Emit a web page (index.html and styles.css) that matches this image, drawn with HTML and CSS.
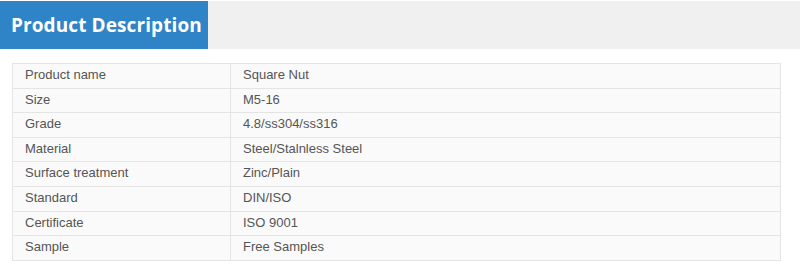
FILE: index.html
```html
<!DOCTYPE html>
<html>
<head>
<meta charset="utf-8">
<link rel="stylesheet" href="styles.css">
</head>
<body>
<div class="band">
  <h2 class="title">Product Description</h2>
</div>
<table class="spec">
  <tr><td class="k">Product name</td><td>Square Nut</td></tr>
  <tr><td class="k">Size</td><td>M5-16</td></tr>
  <tr><td class="k">Grade</td><td>4.8/ss304/ss316</td></tr>
  <tr><td class="k">Material</td><td>Steel/Stalnless Steel</td></tr>
  <tr><td class="k">Surface treatment</td><td>Zinc/Plain</td></tr>
  <tr><td class="k">Standard</td><td>DIN/ISO</td></tr>
  <tr><td class="k">Certificate</td><td>ISO 9001</td></tr>
  <tr><td class="k">Sample</td><td>Free Samples</td></tr>
</table>
</body>
</html>
```

FILE: styles.css
```css
html, body { margin: 0; padding: 0; background: #fff; }
.band {
  margin-top: 1px;
  height: 48px;
  background: #f0f0f0;
  display: flex;
}
.title {
  margin: 0;
  width: 208px;
  box-sizing: border-box;
  background: #2e84c6;
  color: #fff;
  font-family: "Open Sans", sans-serif;
  font-weight: 700;
  font-size: 19px;
  letter-spacing: 0.1px;
  line-height: 48px;
  padding-left: 11px;
  white-space: nowrap;
}
.spec {
  margin: 14px 0 0 12px;
  width: 769px;
  border-collapse: collapse;
  background: #fafafa;
  font-family: "Liberation Sans", Arial, sans-serif;
  font-size: 13px;
  color: #555;
}
.spec td {
  border: 1px solid #e4e4e4;
  padding: 2px 12px 4px;
  line-height: 17.6px;
}
.spec td.k { width: 193px; }
```
